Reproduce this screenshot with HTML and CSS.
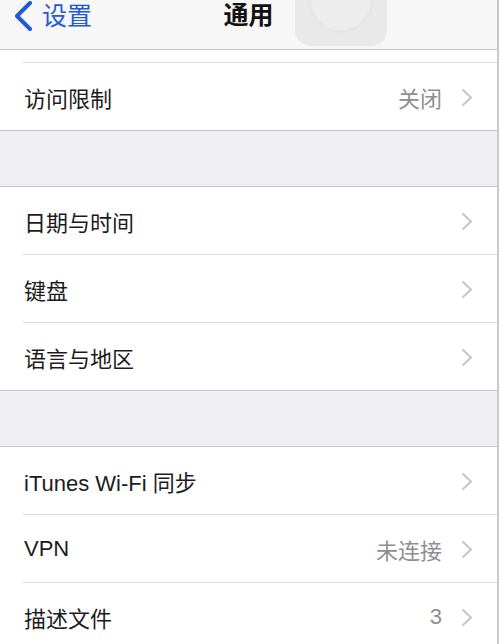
FILE: index.html
```html
<!DOCTYPE html>
<html lang="zh-CN">
<head>
<meta charset="utf-8">
<title>通用</title>
<link rel="stylesheet" href="styles.css">
</head>
<body>
<div class="page">
  <header class="navbar">
    <a class="back">
      <svg class="back-icon" width="22" height="30" viewBox="0 0 22 30"><polyline points="18,2 5,15 18,28" fill="none" stroke="#2159d8" stroke-width="4" stroke-linecap="round" stroke-linejoin="round"/></svg>
      <span class="back-text">设置</span>
    </a>
    <h1 class="title">通用</h1>
    <span class="spacer"></span>
    <div class="assistive"><div class="assistive-ring"></div></div>
  </header>

  <section class="group group-first">
    <div class="stub"></div>
    <div class="row">
      <span class="label">访问限制</span>
      <span class="value">关闭</span>
      <svg class="chev" width="12" height="19" viewBox="0 0 12 19"><polyline points="1.5,1.5 10,9.5 1.5,17.5" fill="none" stroke="#c4c4c9" stroke-width="2"/></svg>
    </div>
  </section>

  <div class="gap"></div>

  <section class="group">
    <div class="row">
      <span class="label">日期与时间</span>
      <svg class="chev" width="12" height="19" viewBox="0 0 12 19"><polyline points="1.5,1.5 10,9.5 1.5,17.5" fill="none" stroke="#c4c4c9" stroke-width="2"/></svg>
    </div>
    <div class="row">
      <span class="label">键盘</span>
      <svg class="chev" width="12" height="19" viewBox="0 0 12 19"><polyline points="1.5,1.5 10,9.5 1.5,17.5" fill="none" stroke="#c4c4c9" stroke-width="2"/></svg>
    </div>
    <div class="row">
      <span class="label">语言与地区</span>
      <svg class="chev" width="12" height="19" viewBox="0 0 12 19"><polyline points="1.5,1.5 10,9.5 1.5,17.5" fill="none" stroke="#c4c4c9" stroke-width="2"/></svg>
    </div>
  </section>

  <div class="gap"></div>

  <section class="group">
    <div class="row">
      <span class="label">iTunes Wi-Fi 同步</span>
      <svg class="chev" width="12" height="19" viewBox="0 0 12 19"><polyline points="1.5,1.5 10,9.5 1.5,17.5" fill="none" stroke="#c4c4c9" stroke-width="2"/></svg>
    </div>
    <div class="row">
      <span class="label">VPN</span>
      <span class="value">未连接</span>
      <svg class="chev" width="12" height="19" viewBox="0 0 12 19"><polyline points="1.5,1.5 10,9.5 1.5,17.5" fill="none" stroke="#c4c4c9" stroke-width="2"/></svg>
    </div>
    <div class="row">
      <span class="label">描述文件</span>
      <span class="value">3</span>
      <svg class="chev" width="12" height="19" viewBox="0 0 12 19"><polyline points="1.5,1.5 10,9.5 1.5,17.5" fill="none" stroke="#c4c4c9" stroke-width="2"/></svg>
    </div>
  </section>
</div>
</body>
</html>
```
FILE: styles.css
```css
html, body {
  margin: 0;
  padding: 0;
  background: #ffffff;
}

body {
  font-family: "Liberation Sans", "Noto Sans CJK SC", sans-serif;
  color: #1c1c1c;
  height: 644px;
  overflow: hidden;
}

.page {
  width: 497px;
  border-right: 2px solid #c9c9cc;
  background: #efeff4;
}

.navbar {
  position: relative;
  height: 49px;
  background: #f7f7f7;
  border-bottom: 1px solid #c8c7cc;
  display: grid;
  grid-template-columns: 1fr auto 1fr;
  align-items: start;
}

.back {
  display: flex;
  align-items: center;
  gap: 8px;
  padding-left: 12px;
  height: 30px;
  margin-top: 1px;
  color: #2159d8;
}

.back-icon {
  display: block;
}

.back-text {
  font-size: 25px;
  line-height: 30px;
}

.title {
  margin: 0;
  font-size: 25px;
  line-height: 30px;
  font-weight: 700;
  color: #111;
}

.assistive {
  position: absolute;
  left: 295px;
  top: -46px;
  width: 92px;
  height: 92px;
  border-radius: 16px;
  background: #e9e9e9;
  overflow: hidden;
}

.assistive-ring {
  position: absolute;
  left: 16px;
  top: 16px;
  width: 60px;
  height: 60px;
  border-radius: 50%;
  background: #ededed;
  box-shadow: 0 0 0 3px #e6e6e6;
}

.group {
  background: #ffffff;
  border-top: 1px solid #c8c7cc;
  border-bottom: 1px solid #c8c7cc;
}

.group-first {
  border-top: none;
}

.stub {
  height: 12px;
  margin-left: 23px;
  border-bottom: 1px solid #dcdce0;
}

.row {
  height: 67px;
  box-sizing: border-box;
  padding: 1px 24px 0 24px;
  display: flex;
  align-items: center;
  font-size: 22px;
  position: relative;
}

.row + .row::before {
  content: "";
  position: absolute;
  left: 23px;
  right: 0;
  top: -1px;
  height: 1px;
  background: #dcdce0;
}

.row + .row {
  margin-top: 1px;
}

.label {
  flex: 1;
  color: #1c1c1c;
  white-space: nowrap;
}

.value {
  color: #8e8e93;
  margin-right: 19px;
}

.chev {
  display: block;
  flex: none;
}

.gap {
  height: 55px;
}
```
